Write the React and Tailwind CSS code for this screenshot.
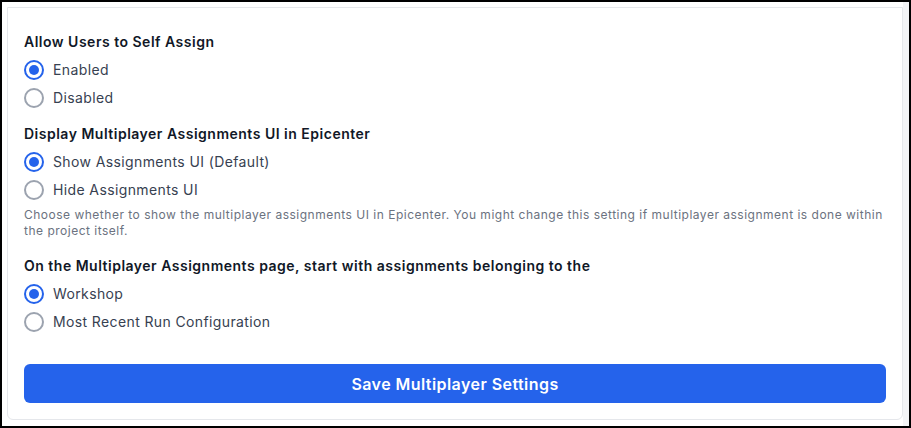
import { useState } from 'react';

const Radio = ({ checked, label, onChange }) => (
  <label className="flex h-7 items-center gap-2 cursor-pointer" onClick={onChange}>
    <span
      className={
        checked
          ? 'flex h-5 w-5 shrink-0 items-center justify-center rounded-full border-2 border-[#2563eb] bg-white'
          : 'flex h-5 w-5 shrink-0 items-center justify-center rounded-full border-2 border-[#9ca3af] bg-white'
      }
    >
      {checked && <span className="h-2.5 w-2.5 rounded-full bg-[#2563eb]" />}
    </span>
    <span className="pl-[1px] text-[14px] leading-5 tracking-[0.38px] text-[#374151]">{label}</span>
  </label>
);

const Group = ({ title, options, value, onChange, className = '' }) => (
  <div className={className}>
    <h3 className="text-[14px] font-semibold leading-5 tracking-[0.5px] text-[#111827]">{title}</h3>
    <div className="mt-1">
      {options.map((o) => (
        <Radio key={o} label={o} checked={value === o} onChange={() => onChange(o)} />
      ))}
    </div>
  </div>
);

export default function App() {
  const [selfAssign, setSelfAssign] = useState('Enabled');
  const [ui, setUi] = useState('Show Assignments UI (Default)');
  const [start, setStart] = useState('Workshop');

  return (
    <div className="h-[428px] w-[911px] overflow-hidden border-2 border-black bg-white" style={{ fontFamily: 'Inter, "Noto Sans", sans-serif' }}>
      <div className="flex h-full">
        <div className="flex-1 pl-[5px] pt-[5px]">
          <div className="rounded-b-md border border-[#e5e7eb] bg-white px-4 pb-4 pt-6">
            <Group
              title="Allow Users to Self Assign"
              options={['Enabled', 'Disabled']}
              value={selfAssign}
              onChange={setSelfAssign}
            />
            <Group
              className="mt-3"
              title="Display Multiplayer Assignments UI in Epicenter"
              options={['Show Assignments UI (Default)', 'Hide Assignments UI']}
              value={ui}
              onChange={setUi}
            />
            <p className="mt-[3px] text-[12px] leading-4 tracking-[0.5px] text-[#6b7280]">
              Choose whether to show the multiplayer assignments UI in Epicenter. You might change this setting if multiplayer assignment is done within the project itself.
            </p>
            <Group
              className="mt-[17px]"
              title="On the Multiplayer Assignments page, start with assignments belonging to the"
              options={['Workshop', 'Most Recent Run Configuration']}
              value={start}
              onChange={setStart}
            />
            <button className="mt-7 flex h-[39px] w-full items-center justify-center rounded-md bg-[#2563eb] text-[16px] font-semibold tracking-[0.44px] text-white">
              Save Multiplayer Settings
            </button>
          </div>
        </div>
        <div className="w-[6px] bg-[#f3f4f6]" />
      </div>
    </div>
  );
}
